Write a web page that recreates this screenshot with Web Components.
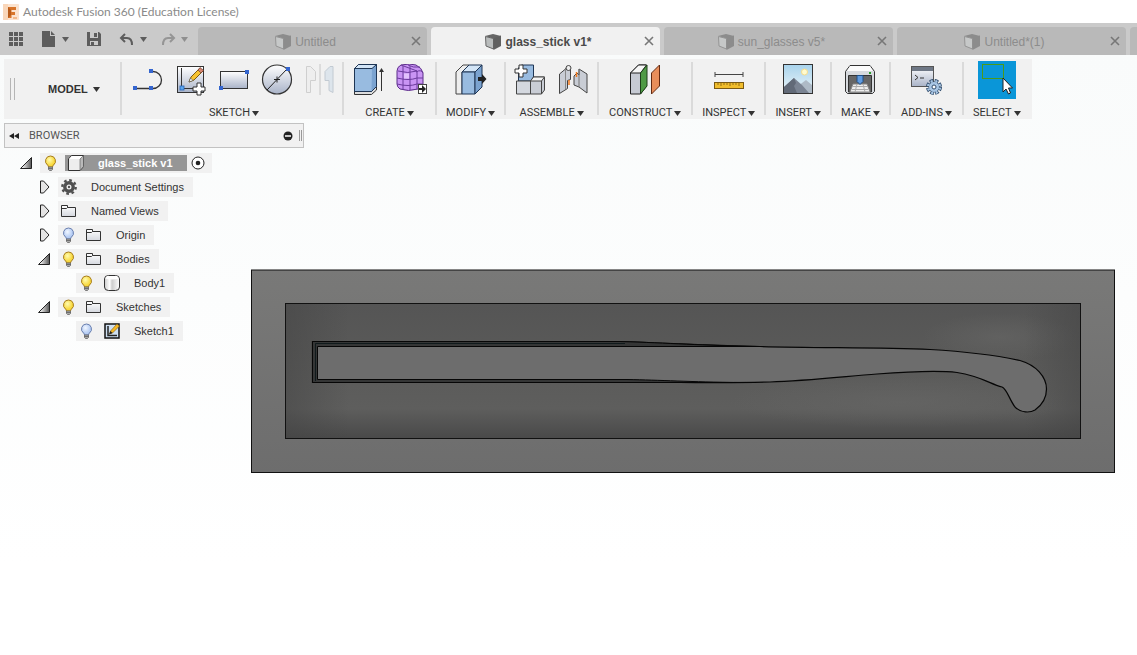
<!DOCTYPE html>
<html lang="en">
<head>
<meta charset="utf-8">
<title>Autodesk Fusion 360</title>
<style>
  body { margin: 0; font: 11px/14px "Liberation Sans", Arial, sans-serif; color: #333; background: #fff; }
</style>
</head>
<body>
<fusion-app></fusion-app>

<script>
/* ---------- icon artwork: [viewBox width, viewBox height, markup] ---------- */
const bulb = (a, b, edge) => `<defs><radialGradient id="b" cx=".4" cy=".35"><stop stop-color="${a}"/><stop offset="1" stop-color="${b}"/></radialGradient></defs>
  <path d="M8.500 1a5 5 0 0 0-3 9q1 .9 1 2h4q0-1.100 1-2A5 5 0 0 0 8.500 1z" fill="url(#b)" stroke="${edge}"/>
  <path d="M6.500 12h4v2.500l-1 1h-2l-1-1z" fill="#aaa" stroke="#666" stroke-width=".8"/><path d="M6.500 13.500h4" stroke="#555" stroke-width=".7"/>`;
const blue = 'fill="#3465cf"';
const steel = '<linearGradient id="s" x2="0" y2="1"><stop stop-color="#fff"/><stop offset="1" stop-color="#a9b3c8"/></linearGradient>';
const ICONS = {
  logo: [16, 16, `<rect width="16" height="16" rx="1" fill="#fbe3cf"/><path d="M0 0h5v16H0z" fill="#f9d6b9"/><path d="M5 3h8v3H8.500v2H12v3H8.500v3H5z" fill="#d8752a"/><path d="M5 3l3 3v5l-3 3z" fill="#b85b1a"/><path d="M10 13h4v2h-4z" fill="#f3b98b"/>`],
  apps: [16, 16, `<path d="M1 1h4v4H1zM6 1h4v4H6zM11 1h4v4h-4zM1 6h4v4H1zM6 6h4v4H6zM11 6h4v4h-4zM1 11h4v4H1zM6 11h4v4H6zM11 11h4v4h-4z" fill="#5d5d5d"/>`],
  file: [16, 16, `<path d="M1 0h8v5h5v11H1z" fill="#5d5d5d"/><path d="M10 0l4 4h-4z" fill="#5d5d5d"/>`],
  save: [16, 16, `<path d="M1 1h12l2 2v12H1z" fill="#5d5d5d"/><path d="M4 1h8v6H4zM4 10h8v4H4z" fill="#cacaca"/><path d="M8 2h3v4H8zM5 11h3v3H5z" fill="#5d5d5d"/>`],
  undo: [16, 16, `<path d="M6 3L2 7l4 4M2.500 7H8q5 0 5 7" fill="none" stroke="#5d5d5d" stroke-width="2"/>`],
  redo: [16, 16, `<path d="M10 3l4 4-4 4M13.500 7H8q-5 0-5 7" fill="none" stroke="#959595" stroke-width="2"/>`],
  caret: [7, 5, `<path d="M0 0h7L3.500 5z" fill="currentColor"/>`],
  doc: [16, 16, `<path d="M0 2l8-2 8 2-7 3z" fill="#8c8c8c"/><path d="M.5 2.500l8 2v10.500L1 12z" fill="#c6c8c8" stroke="#949494"/><path d="M8.500 4L16 1.500V12l-7.500 4z" fill="#8c8c8c"/>`],
  docOn: [16, 16, `<path d="M0 2l8-2 8 2-7 3z" fill="#666"/><path d="M.5 2.500l8 2v10.500L1 12z" fill="#b9bcbc" stroke="#666"/><path d="M8.500 4L16 1.500V12l-7.500 4z" fill="#606060"/>`],
  close: [10, 10, `<path d="M1 1l8 8M9 1L1 9" stroke="#777" stroke-width="1.600"/>`],

  line: [32, 32, `<path d="M3 24.500h18a8.500 8.500 0 0 0 0-17h-2" fill="none" stroke="#333" stroke-width="1.300"/><path d="M1 22h4v4H1zM17 22h4v4h-4zM17 5h4v4h-4z" ${blue}/>`],
  sketch: [32, 32, `<defs>${steel}</defs><rect x="2.500" y="2.500" width="26" height="26" fill="url(#s)" stroke="#333"/><path d="M6.500 4v20.500H24" fill="none" stroke="#333"/><rect x="5" y="22" width="4" height="4" fill="#5aa6ee" stroke="#2563b8" stroke-width=".8"/>
    <path d="M14 18l2-5 9-9 3 3-9 9z" fill="#f7c331" stroke="#7b5a12"/><path d="M23 6l2-2.500 3.500 3L26 9z" fill="#d88570" stroke="#6d3b2c" stroke-width=".7"/><path d="M14 18l1.500-4 2.500 2.500z" fill="#fff" stroke="#444" stroke-width=".6"/>
    <path d="M22 19h4v4h4v4h-4v4h-4v-4h-4v-4h4z" fill="#fff" stroke="#333"/>`],
  rect: [32, 32, `<defs>${steel}</defs><rect x="2.500" y="7.500" width="27" height="17" fill="url(#s)" stroke="#333"/><path d="M27 6h4v4h-4zM1 22h4v4H1z" ${blue}/>`],
  circle: [32, 32, `<defs>${steel}</defs><circle cx="16" cy="15.500" r="14.500" fill="url(#s)" stroke="#333" stroke-width="1.200"/><path d="M6 26L26 5M13 15.500h6M16 12.500v6" stroke="#222"/><path d="M25 3h4v4h-4z" ${blue}/>`],
  mirror: [32, 32, `<path d="M2.500 2.500h4l5 5v9h-5v12h-4z" fill="#eee" stroke="#cfcfcf"/><path d="M16 0v31" stroke="#c6c6c6"/><path d="M29 2.500h-3l-5 5v9h4v10l4 2z" fill="#dde5ec" stroke="#c2cad2"/>`],
  extrude: [32, 32, `<path d="M2.500 25h17l5-4v5l-5 4.500h-17z" fill="#ddd" stroke="#333"/><path d="M2.500 4.500l4-4h18v22l-5 5h-17z" fill="#98bbe0" stroke="#1e3554"/><path d="M2.500 4.500l4-4h18l-4.500 4z" fill="#d3e5f7"/><path d="M20 4.500l4.500-4v22l-5 5z" fill="#7ba3d0"/><path d="M2.500 4.500l4-4h18v22l-5 5h-17zM2.500 4.500h17.500l4.500-4" fill="none" stroke="#1e3554"/><path d="M29.500 27V6" stroke="#333"/><path d="M27 8l2.500-4L32 8z" fill="#333"/>`],
  form: [32, 32, `<path d="M2 7q0-4 4-6 9-2 15 0 6 3 7 8v11q-2 4-5 5-10 3-18 0-3-2-3-5z" fill="#c994f4" stroke="#5b2d88"/><path d="M3 7q10 3 19 0M21 8q5-3 7 1M2 14q12 3 20 0l6 0M2 20q12 3 20 0l6 0M8 2v24M15 2v24M22 7v18M6 1l16 6M13 1q5 3 12 2" fill="none" stroke="#6b3b9c"/><path d="M9 9.500h5v5H9z" fill="#e2c2fc"/><rect x="23.500" y="20.500" width="8" height="9" fill="#fff" stroke="#444"/><path d="M24 24h3v-3l4 4-4 4v-3h-3z" fill="#222"/>`],
  press: [32, 32, `<path d="M1 8l7-7h6L7 8v22H1z" fill="#eee" stroke="#444"/><path d="M7 8l7-7h13l-7 7z" fill="#d3e5f7" stroke="#1e3554"/><path d="M7 8h13v22H7z" fill="#98bbe0" stroke="#1e3554"/><path d="M20 8l7-7v22l-7 7z" fill="#7ba3d0" stroke="#1e3554"/><path d="M23 13h4v-3l4.500 5-4.500 5v-3h-4z" fill="#222"/>`],
  component: [32, 32, `<path d="M4.500 4l3-3h12v14l-3 2h-12z" fill="#98bbe0" stroke="#1e3554"/><path d="M2.500 17h14v13h-14z" fill="#d4d8df" stroke="#444"/><path d="M16.500 17l3-4h11v13l-3 4h-11z" fill="#c9cdd5" stroke="#444"/><path d="M16.500 17l3-4h11l-3 4z" fill="#f5f5f5" stroke="#444"/><path d="M27.500 17v13" stroke="#444"/><path d="M5 1h4v4h4v4H9v4H5V9H1V5h4z" fill="#fff" stroke="#333"/>`],
  joint: [32, 32, `<path d="M2.500 10l6-5 2-2.500 3 1v12l-3 1v8l-8 5z" fill="#c9cdd5" stroke="#444"/><path d="M8.500 5v20" stroke="#888"/><circle cx="11.500" cy="4" r="2.500" fill="#eee" stroke="#444"/><path d="M17 12l3-3 2 2V5l8 5v19l-8-6-5-2z" fill="#c9cdd5" stroke="#444"/><path d="M22 5v18" stroke="#777"/><path d="M12 16v5M19.500 8v5" stroke="#f37a1c" stroke-width="1.500"/>`],
  plane: [32, 32, `<path d="M1.500 9l8-8h8v21l-6 8h-10z" fill="#c6cad3" stroke="#222"/><path d="M1.500 9l8-8h8l-6 8z" fill="#f6f6f6" stroke="#222"/><path d="M11.500 9l6.500-8v21l-6.500 8z" fill="#4f9a45" stroke="#1f3f1b"/><path d="M22.500 9l8-8v21l-8 8z" fill="#e88e5b" stroke="#632a12"/>`],
  measure: [32, 32, `<path d="M2 10.500h28M2 8v5M30 8v5" stroke="#444"/><rect x="1.500" y="18.500" width="29" height="6" fill="#f0bd2c" stroke="#7b5a12"/><path d="M5 19v2M8 19v3M11 19v2M14 19v2M17 19v3M20 19v2M23 19v2M26 19v3" stroke="#6d4d08" stroke-width=".7"/>`],
  picture: [32, 32, `<defs><linearGradient id="k" x2="0" y2="1"><stop stop-color="#a8d3ec"/><stop offset="1" stop-color="#eef6fa"/></linearGradient></defs><rect x="1.500" y=".5" width="29" height="29" fill="url(#k)" stroke="#333"/><circle cx="22.500" cy="8" r="3" fill="#fffbd0" stroke="#f5dc8c"/><path d="M16 22l8-6 6 5v8H16z" fill="#aebac6"/><path d="M2 23l10-9 8 7 7 8H2z" fill="#7b8493"/><path d="M12 14l2 5-2 3 3 7H2v-6z" fill="#626a78"/>`],
  print: [32, 32, `<path d="M6 1.500h20l4.500 6v20l-2 2h-25l-2-2v-20z" fill="#d7dade" stroke="#333"/><path d="M6 2h20l3 5H3z" fill="#fbfbfb"/><path d="M4.500 11.500h23V28h-23z" fill="#666" stroke="#333"/><path d="M9 20h14l3 8H6z" fill="#eee" stroke="#888"/><path d="M9 22.500h14M8 25.500h16M13 20l-2 8M19 20l2 8" stroke="#aaa"/><path d="M13 11.500h6v6l-3 3-3-3z" fill="#5f9be0" stroke="#1f4f88"/><path d="M25 8h2v2h-2z" fill="#2a9b2a"/>`],
  script: [32, 32, `<defs>${steel}</defs><rect x="1.500" y="2.500" width="22" height="20" fill="url(#s)" stroke="#555"/><path d="M2 3h21v4H2z" fill="#6e7785"/><path d="M5 11l3 2.500L5 16M10 14h4" fill="none" stroke="#333"/><circle cx="24" cy="23" r="6" fill="none" stroke="#2d4a6b" stroke-width="4" stroke-dasharray="3.300 1.410"/><circle cx="24" cy="23" r="5.500" fill="#2d4a6b"/><circle cx="24" cy="23" r="6" fill="none" stroke="#a9c6e4" stroke-width="2.400" stroke-dasharray="2 2.710" stroke-dashoffset="-.65"/><circle cx="24" cy="23" r="3.500" fill="#fff" stroke="#a9c6e4" stroke-width="3"/><circle cx="24" cy="23" r="2" fill="#fff" stroke="#2d4a6b"/>`],
  select: [38, 38, `<path d="M0 0h38v38H0z" fill="#0a96d8"/><rect x="4" y="3" width="22" height="15" fill="#4b9a1a"/><rect x="5" y="4" width="20" height="13" fill="#0a96d8"/><path d="M25 17v14l3-3 2.500 5 2-1-2-5h4z" fill="#fff" stroke="#222"/>`],

  rewind: [10, 8, `<path d="M5 1v6L0 4zM10 1v6L5 4z" fill="#222"/>`],
  minus: [10, 10, `<circle cx="5" cy="5" r="4.500" fill="#222"/><path d="M2 5h6" stroke="#fff" stroke-width="1.500"/>`],
  open: [14, 14, `<defs><linearGradient id="o"><stop offset=".2" stop-color="#eee"/><stop offset="1" stop-color="#555"/></linearGradient></defs><path d="M11.500 1.500v11h-11z" fill="url(#o)" stroke="#222"/>`],
  shut: [14, 14, `<path d="M2.500 1h3l5.500 6-5.500 6h-3z" fill="#e4e4e4" stroke="#222"/>`],
  bulbOn: [16, 17, bulb('#fffbb0', '#f8d83c', '#a67c1e')],
  bulbOff: [16, 17, bulb('#f2f7ff', '#b4ccf4', '#6a7fae')],
  cube: [16, 16, `<path d="M.5 4l3-3.500h12v11L12 15.500H.5z" fill="#eee" stroke="#333"/><path d="M1 4l3-3h11l-3 3z" fill="#fff"/><path d="M12 4l3.500-3.500v11L12 15.500z" fill="#b9b9b9" stroke="#555" stroke-width=".6"/>`],
  gear: [16, 16, `<circle cx="8" cy="8" r="6.700" fill="none" stroke="#505050" stroke-width="2.400" stroke-dasharray="2.630"/><circle cx="8" cy="8" r="4.200" fill="none" stroke="#505050" stroke-width="3.400"/><circle cx="8" cy="8" r="1.200" fill="#505050"/>`],
  folder: [16, 16, `<defs><linearGradient id="f" x2="0" y2="1"><stop stop-color="#fff"/><stop offset="1" stop-color="#d5d8df"/></linearGradient></defs><path d="M.5 13.500v-11h6v2h8v9z" fill="url(#f)" stroke="#333"/><path d="M.5 5.500h5l1-1" fill="none" stroke="#333"/>`],
  body: [16, 16, `<defs><linearGradient id="y"><stop stop-color="#ccc"/><stop offset=".35" stop-color="#fff"/><stop offset=".5" stop-color="#ccc"/><stop offset="1" stop-color="#fff"/></linearGradient></defs><path d="M.5 4q0-3.500 4-3.500h7q4 0 4 3.500v8q0 3.500-4 3.500h-7q-4 0-4-3.500z" fill="url(#y)" stroke="#333"/><path d="M1 3.500q7 2 14 0L13 1H3z" fill="#fff"/>`],
  sketchItem: [16, 16, `<rect x="1" y="1" width="14" height="14" fill="#cfe0f2" stroke="#111" stroke-width="1.500"/><path d="M4 3v9.500h9" fill="none" stroke="#222" stroke-width="1.500"/><path d="M5.500 11l1-3L13 1l2.500 2-7 7z" fill="#f7b825" stroke="#7b5a12" stroke-width=".6"/><path d="M5 11.500l1.500-3.500L8.500 10z" fill="#222"/>`],
  target: [14, 14, `<circle cx="7" cy="7" r="6" fill="#fff" stroke="#222"/><circle cx="7" cy="7" r="2.300" fill="#222"/>`]
};

class UiIcon extends HTMLElement {
  connectedCallback() {
    const [w, h, art] = ICONS[this.getAttribute('name')];
    this.attachShadow({ mode: 'open' }).innerHTML =
      `<style>:host{display:block;flex:none}svg{display:block}</style>
       <svg width="${w}" height="${h}" viewBox="0 0 ${w} ${h}" aria-hidden="true">${art}</svg>`;
  }
}
customElements.define('ui-icon', UiIcon);

const RESET = 'button{all:unset;box-sizing:border-box;display:flex;align-items:center;cursor:default}';

/* Registers an element whose shadow root is built by render(host). */
const define = (tag, render) => customElements.define(tag, class extends HTMLElement {
  connectedCallback() {
    if (!this.shadowRoot) this.attachShadow({ mode: 'open' }).innerHTML = render(this);
  }
});

define('title-bar', () => `
  <style>
    :host { display: flex; align-items: center; gap: 4px; height: 23px; padding-left: 3px; background: #fff; color: #8a8a8a; font: 12px/23px Lato, sans-serif; }
  </style>
  <ui-icon name="logo"></ui-icon><slot></slot>`);

define('quick-access', () => `
  <style>
    ${RESET}
    :host { display: flex; flex: none; align-items: center; gap: 17px; box-sizing: border-box; width: 198px; padding-left: 8px; color: #5d5d5d; }
    button { gap: 5px; }
    div { display: flex; gap: 13px; }
    .off { color: #8f8f8f; }
  </style>
  <button aria-label="Data panel"><ui-icon name="apps"></ui-icon></button>
  <button aria-label="File"><ui-icon name="file"></ui-icon><ui-icon name="caret"></ui-icon></button>
  <button aria-label="Save"><ui-icon name="save"></ui-icon></button>
  <div>
    <button aria-label="Undo"><ui-icon name="undo"></ui-icon><ui-icon name="caret"></ui-icon></button>
    <button aria-label="Redo" class="off"><ui-icon name="redo"></ui-icon><ui-icon name="caret"></ui-icon></button>
  </div>`);

define('doc-tab', host => `
  <style>
    ${RESET}
    :host { display: flex; flex: 0 0 229px; box-sizing: border-box; padding: 0 6px; align-items: center; border-radius: 4px 4px 0 0; background: #b9b9b9; color: #8c8c8c; font-size: 12px; }
    :host([active]) { background: #f1f1f1; color: #4a4a4a; font-weight: bold; }
    .name { flex: 1; justify-content: center; gap: 4px; padding: 1px 4px 0 0; line-height: 16px; }
  </style>
  <button class="name"><ui-icon name="${host.hasAttribute('active') ? 'docOn' : 'doc'}"></ui-icon><slot></slot></button>
  <button aria-label="Close tab"><ui-icon name="close"></ui-icon></button>`);

define('tab-strip', () => `
  <style>
    :host { display: flex; height: 32px; background: #cacaca; }
    nav { flex: 1; min-width: 0; display: flex; gap: 4px; padding-top: 4px; overflow: hidden; }
  </style>
  <quick-access></quick-access>
  <nav aria-label="Documents"><slot></slot></nav>`);

define('tool-group', host => `
  <style>
    ${RESET}
    :host { display: flex; flex-direction: column; align-items: center; gap: 7px; padding: 0 10px 0 8px; color: #333; background: linear-gradient(#dadada, #dadada) right 3px / 2px 53px no-repeat; }
    :host(:first-child) { padding: 0 8px 0 10px; }
    :host(:last-child) { background: none; }
    .tools { display: flex; align-items: center; gap: 11px; height: 42px; }
    .label { gap: 2px; padding: 0 1px; font: 11px/12px Roboto, sans-serif; }
    :host([wide]) .label { padding: 0 2px; }
  </style>
  <div class="tools">${host.getAttribute('icons').split(' ').map(n => `<button aria-label="${n}"><ui-icon name="${n}"></ui-icon></button>`).join('')}</div>
  <button class="label"><slot></slot><ui-icon name="caret"></ui-icon></button>`);

define('tool-bar', () => `
  <style>
    ${RESET}
    :host { display: flex; width: max-content; height: 60px; background: #f1f1f1; }
    .workspace { width: 118px; gap: 5px; padding-left: 6px; font: bold 11px/14px "Liberation Sans", sans-serif; background: linear-gradient(#dadada, #dadada) right 3px / 2px 53px no-repeat; }
    .grip { width: 3px; height: 22px; margin-right: 28px; border: solid #b5b5b5; border-width: 0 1px; }
  </style>
  <button class="workspace"><span class="grip"></span>MODEL<ui-icon name="caret"></ui-icon></button>
  <slot></slot>`);

define('tree-row', host => {
  const has = n => host.hasAttribute(n), get = n => host.getAttribute(n);
  return `
  <style>
    ${RESET}
    :host { display: flex; gap: 4px; height: 20px; padding-left: calc(18px + 18px * ${get('level')}); }
    .toggle { width: 18px; justify-content: center; }
    .chip { display: flex; align-items: center; background: #f1f1f1; }
    .bulb { width: 25px; padding-left: 2px; }
    .item { gap: 14px; height: 16px; padding: 0 9px 0 3px; color: #333; }
    :host([root]) .item { background: #969696; color: #fff; font-weight: bold; padding-right: 14px; }
    .target { padding: 0 7px 0 4px; }
  </style>
  <button class="toggle" aria-label="Expand">${has('toggle') ? `<ui-icon name="${get('toggle')}"></ui-icon>` : ''}</button>
  <div class="chip">
    ${has('bulb') ? `<button class="bulb" aria-label="Visibility"><ui-icon name="${get('bulb')}"></ui-icon></button>` : ''}
    <button class="item"><ui-icon name="${get('icon')}"></ui-icon><slot></slot></button>
    ${has('root') ? '<button class="target" aria-label="Activate"><ui-icon name="target"></ui-icon></button>' : ''}
  </div>`;
});

define('browser-panel', () => `
  <style>
    ${RESET}
    :host { display: block; }
    header { display: flex; align-items: center; box-sizing: border-box; width: 300px; height: 25px; padding: 0 1px 0 4px; border: 1px solid #c2c2c2; background: #f1f1f1; color: #555; font: 11px/14px Roboto, sans-serif; }
    .name { flex: 1; padding-left: 10px; }
    .grip { width: 1px; height: 11px; margin-left: 6px; border: solid #999; border-width: 0 1px; }
    .rows { display: grid; gap: 4px; padding-top: 5px; margin-left: -4px; }
  </style>
  <header>
    <button aria-label="Collapse"><ui-icon name="rewind"></ui-icon></button>
    <span class="name">BROWSER</span>
    <button aria-label="Hide"><ui-icon name="minus"></ui-icon></button>
    <span class="grip"></span>
  </header>
  <div class="rows"><slot></slot></div>`);

define('model-view', () => `
  <style>:host { display: block; } svg { display: block; }</style>
  <svg width="865" height="205" viewBox="251 269 865 205" role="img" aria-label="Mould with glasses stick cavity">
    <defs>
      <linearGradient id="block" x2="0" y2="1"><stop stop-color="#797978"/><stop offset="1" stop-color="#6d6d6d"/></linearGradient>
      <linearGradient id="pocket" x2="0" y2="1"><stop stop-color="#555"/><stop offset=".35" stop-color="#595958"/><stop offset=".78" stop-color="#5e5e5d"/><stop offset="1" stop-color="#494949"/></linearGradient>
      <linearGradient id="sides"><stop stop-color="#444" stop-opacity=".5"/><stop offset=".08" stop-color="#444" stop-opacity="0"/><stop offset=".93" stop-color="#444" stop-opacity="0"/><stop offset="1" stop-color="#444" stop-opacity=".5"/></linearGradient>
      <radialGradient id="glow"><stop stop-color="#676766" stop-opacity=".6"/><stop offset="1" stop-color="#676766" stop-opacity="0"/></radialGradient>
    </defs>
    <rect x="251.500" y="270" width="863" height="202.500" fill="url(#block)" stroke="#111"/>
    <rect x="285.500" y="303.500" width="795" height="135" fill="url(#pocket)"/>
    <ellipse cx="900" cy="402" rx="170" ry="26" fill="url(#glow)"/>
    <ellipse cx="1000" cy="337" rx="78" ry="24" fill="url(#glow)"/>
    <rect x="285.500" y="303.500" width="795" height="135" fill="url(#sides)" stroke="#111"/>
    <path d="M312.500 341.500H620C670 343 700 345.500 760 346.500C820 348 880 347.500 930 349.500C965 351.500 995 355 1020 360.500C1036 365 1046.500 377 1046.500 389C1046.500 397 1042 405 1035 410C1030 413 1021 413 1015 407C1009 399 1007 389 1002 387C990 384 982 376.500 957 372.500C940 370.500 910 371.500 877 374C840 377 805 381 770 382C740 383 700 382.500 680 382.500H312.500z" fill="#6d6d6d" stroke="#060606" stroke-width="1.200"/>
    <path d="M312.500 341.500H620C670 343 700 345.500 760 346.500H317.500V379.500H627C660 380 690 382 740 382.500H312.500z" fill="#353636" stroke="#060606"/>
    <path d="M315.500 381V343.500H625" fill="none" stroke="#111b1d"/>
  </svg>`);

define('fusion-app', () => `
  <style>
    :host { display: flex; flex-direction: column; min-height: 100vh; }
    main { position: relative; flex: 1; display: flex; flex-direction: column; align-items: flex-start; gap: 4px; padding: 4px; background: linear-gradient(#f9fbfb, #fcfdfd 40%, #fff 85%); }
    model-view { position: absolute; left: 251px; top: 214px; }
    browser-panel { position: relative; }
  </style>
  <title-bar>Autodesk Fusion 360 (Education License)</title-bar>
  <tab-strip>
    <doc-tab>Untitled</doc-tab><doc-tab active>glass_stick v1*</doc-tab><doc-tab>sun_glasses v5*</doc-tab><doc-tab>Untitled*(1)</doc-tab><doc-tab></doc-tab>
  </tab-strip>
  <main>
    <model-view></model-view>
    <tool-bar>
      <tool-group icons="line sketch rect circle mirror">SKETCH</tool-group>
      <tool-group icons="extrude form">CREATE</tool-group>
      <tool-group icons="press">MODIFY</tool-group>
      <tool-group icons="component joint">ASSEMBLE</tool-group>
      <tool-group wide icons="plane">CONSTRUCT</tool-group>
      <tool-group icons="measure">INSPECT</tool-group>
      <tool-group icons="picture">INSERT</tool-group>
      <tool-group icons="print">MAKE</tool-group>
      <tool-group wide icons="script">ADD-INS</tool-group>
      <tool-group icons="select">SELECT</tool-group>
    </tool-bar>
    <browser-panel>
      <tree-row level="0" root toggle="open" bulb="bulbOn" icon="cube">glass_stick v1</tree-row>
      <tree-row level="1" toggle="shut" icon="gear">Document Settings</tree-row>
      <tree-row level="1" toggle="shut" icon="folder">Named Views</tree-row>
      <tree-row level="1" toggle="shut" bulb="bulbOff" icon="folder">Origin</tree-row>
      <tree-row level="1" toggle="open" bulb="bulbOn" icon="folder">Bodies</tree-row>
      <tree-row level="2" bulb="bulbOn" icon="body">Body1</tree-row>
      <tree-row level="1" toggle="open" bulb="bulbOn" icon="folder">Sketches</tree-row>
      <tree-row level="2" bulb="bulbOff" icon="sketchItem">Sketch1</tree-row>
    </browser-panel>
  </main>`);
</script>
</body>
</html>
